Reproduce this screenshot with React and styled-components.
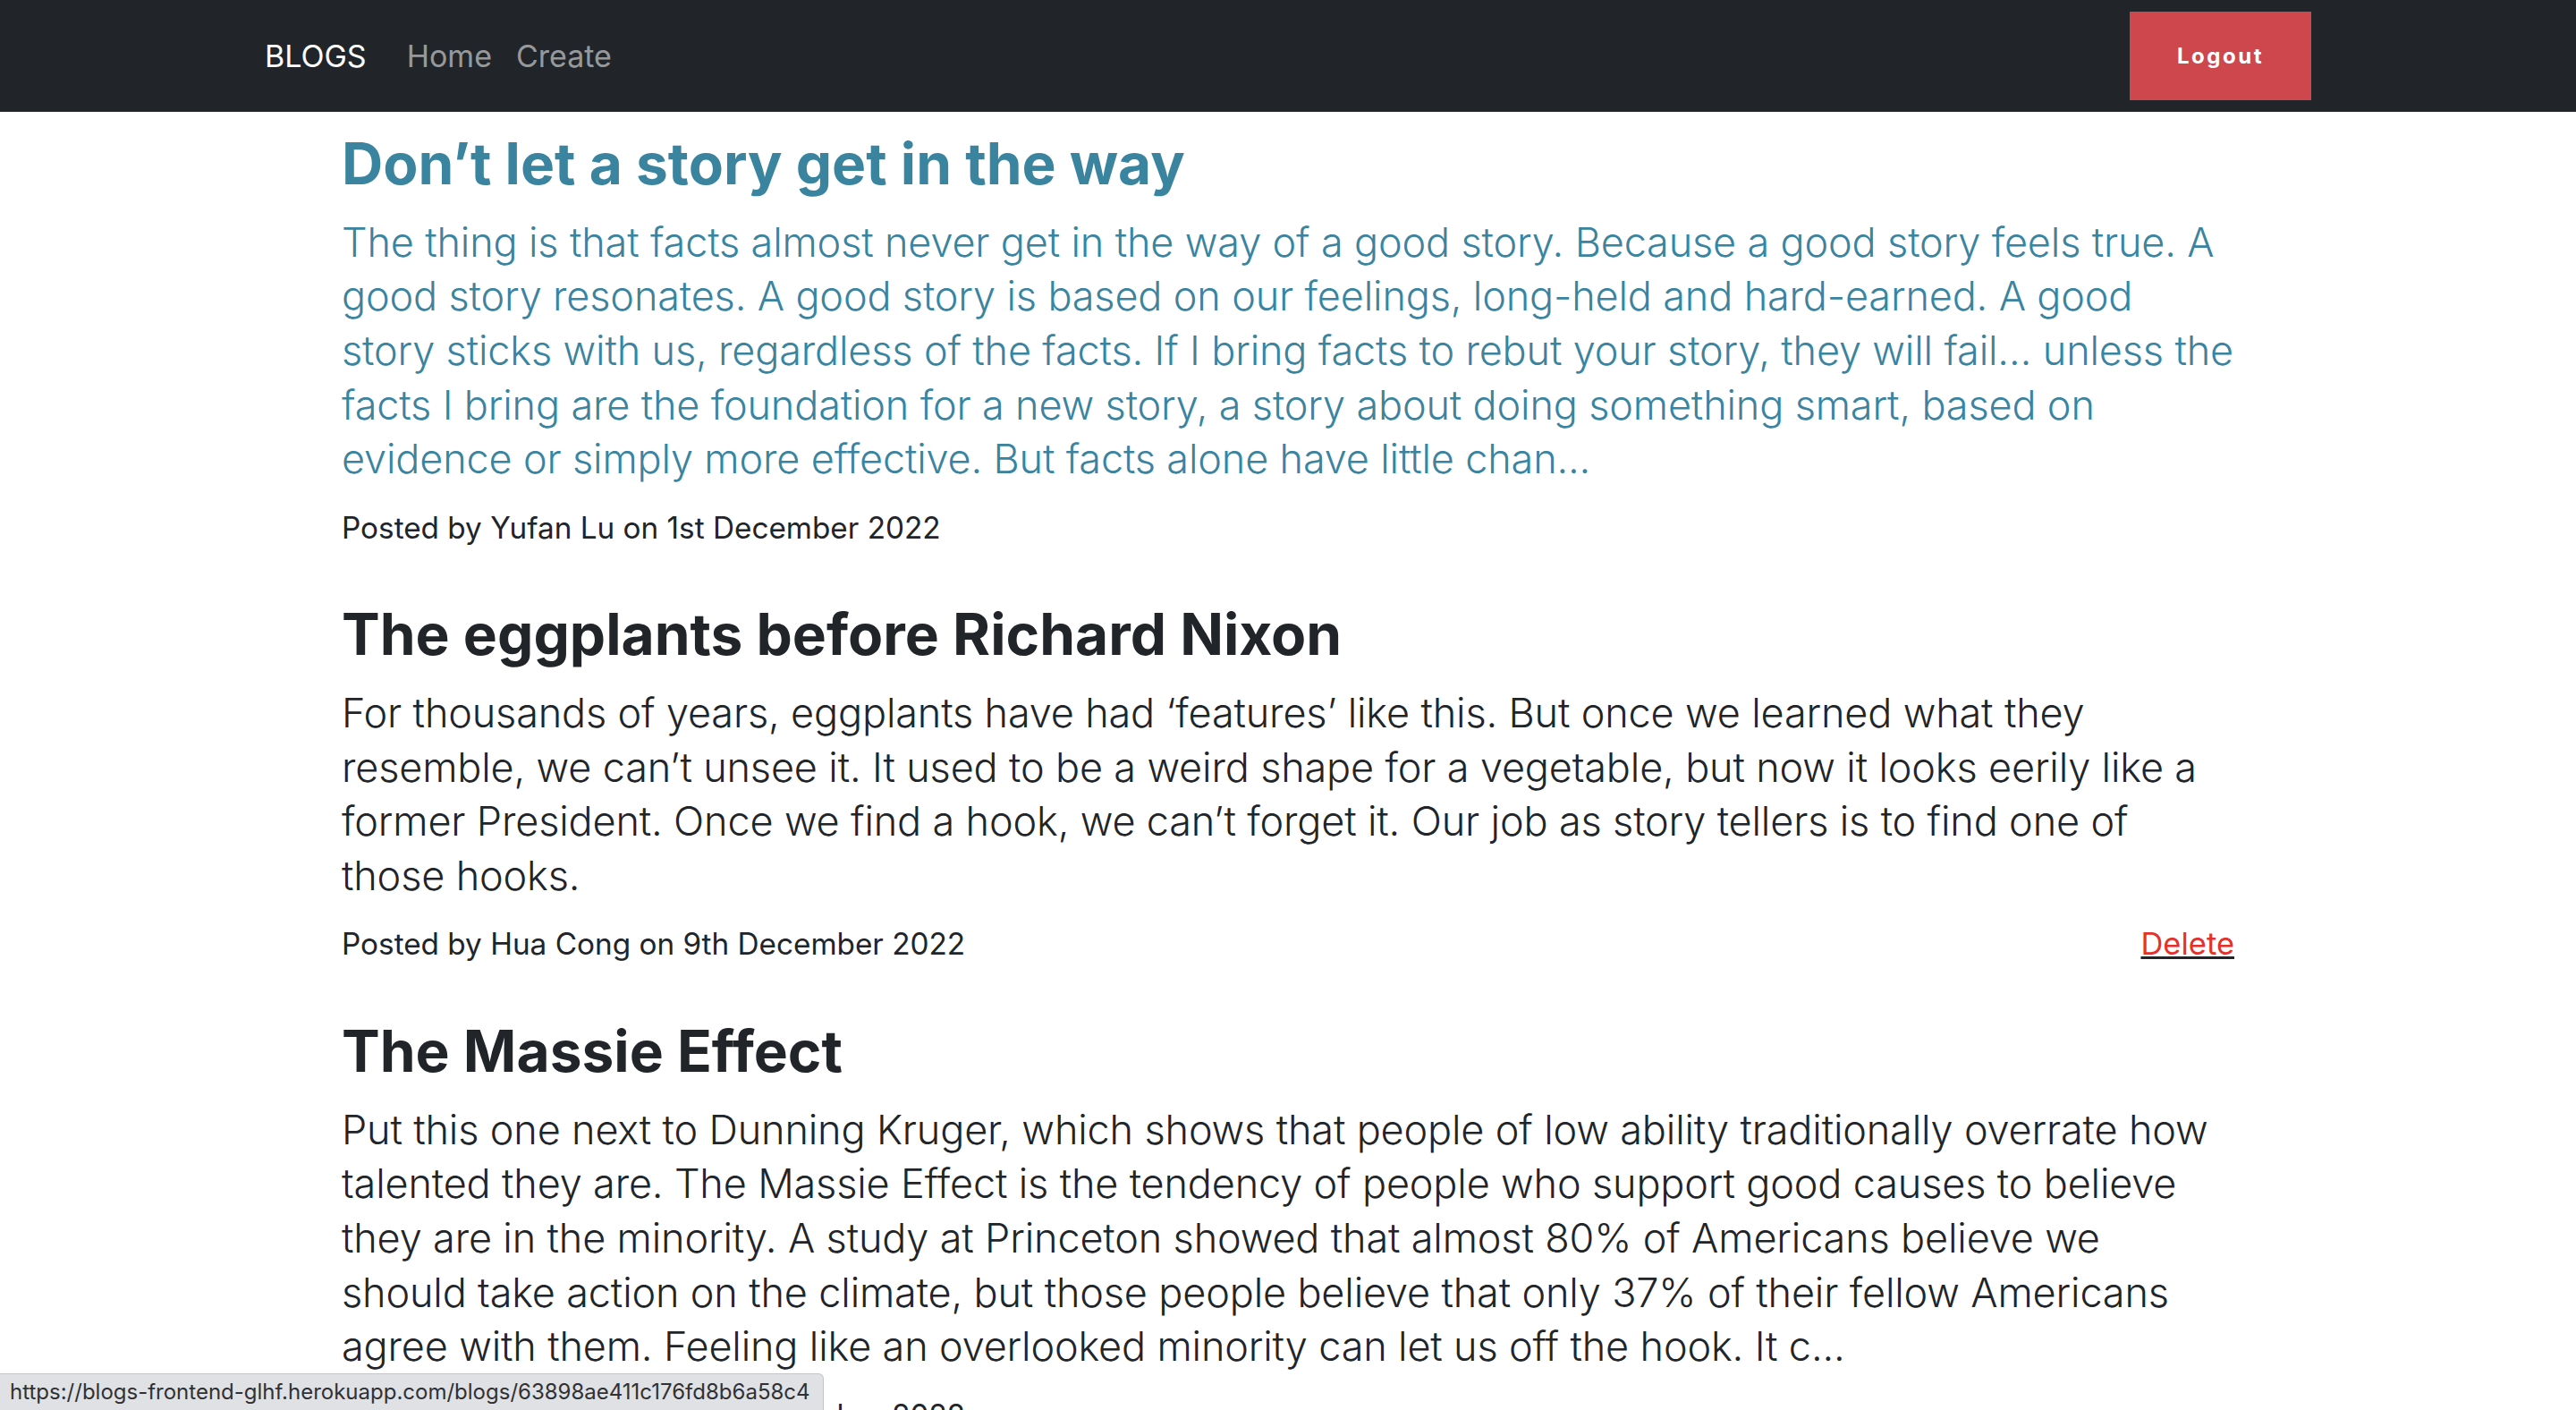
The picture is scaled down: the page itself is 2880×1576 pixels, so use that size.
import React from "react";
import styled, { createGlobalStyle } from "styled-components";

const GlobalStyle = createGlobalStyle`
  body {
    margin: 0;
    background: #fff;
    color: #212529;
    font-family: Inter, "Noto Sans", sans-serif;
  }
`;

const Navbar = styled.nav`
  background: #212529;
  height: 125px;
  display: flex;
  align-items: center;
`;

const NavInner = styled.div`
  width: 2288px;
  margin: 0 auto;
  display: flex;
  align-items: center;
`;

const Brand = styled.a`
  color: #fff;
  font-size: 34px;
  margin-right: 45px;
  text-decoration: none;
`;

const NavLink = styled.a`
  color: rgba(255, 255, 255, 0.55);
  font-size: 34px;
  margin-right: 27px;
  text-decoration: none;
`;

const LogoutButton = styled.button`
  margin-left: auto;
  width: 203px;
  height: 99px;
  background: #cd474d;
  border: none;
  color: #fff;
  font-family: inherit;
  font-weight: 700;
  font-size: 24px;
  letter-spacing: 2.5px;
`;

const Main = styled.main`
  width: 2116px;
  margin: 0 auto;
  padding-top: 20px;
`;

const Post = styled.article`
  margin-bottom: 57px;
`;

const PostLink = styled.a`
  display: block;
  text-decoration: none;
  color: ${(p) => (p.$hover ? "#3a849f" : "#212529")};
`;

const Title = styled.h2`
  margin: 0 0 19px;
  font-size: 64px;
  font-weight: 700;
  line-height: 1.2;
`;

const Body = styled.p`
  margin: 0 0 22px;
  font-size: 45px;
  font-weight: 300;
  line-height: 60.6px;
  letter-spacing: -0.15px;
`;

const MetaRow = styled.div`
  display: flex;
  justify-content: space-between;
  align-items: center;
  font-size: 33.3px;
  line-height: 48.5px;
`;

const DeleteLink = styled.a`
  color: #212529;
  font-size: 34.5px;
  text-decoration: underline;
  span {
    color: #e4312b;
  }
`;

const StatusBar = styled.div`
  position: fixed;
  left: 0;
  bottom: 0;
  height: 40px;
  padding: 0 14px 0 11px;
  background: #dfe1e5;
  border: 1px solid #c3c6ca;
  border-left: none;
  border-bottom: none;
  border-top-right-radius: 6px;
  color: #2f3134;
  font-size: 24px;
  line-height: 40px;
`;

const posts = [
  {
    title: "Don’t let a story get in the way",
    body: "The thing is that facts almost never get in the way of a good story. Because a good story feels true. A good story resonates. A good story is based on our feelings, long-held and hard-earned. A good story sticks with us, regardless of the facts. If I bring facts to rebut your story, they will fail… unless the facts I bring are the foundation for a new story, a story about doing something smart, based on evidence or simply more effective. But facts alone have little chan...",
    meta: "Posted by Yufan Lu on 1st December 2022",
    hover: true,
  },
  {
    title: "The eggplants before Richard Nixon",
    body: "For thousands of years, eggplants have had ‘features’ like this. But once we learned what they resemble, we can’t unsee it. It used to be a weird shape for a vegetable, but now it looks eerily like a former President. Once we find a hook, we can’t forget it. Our job as story tellers is to find one of those hooks.",
    meta: "Posted by Hua Cong on 9th December 2022",
    canDelete: true,
  },
  {
    title: "The Massie Effect",
    body: "Put this one next to Dunning Kruger, which shows that people of low ability traditionally overrate how talented they are. The Massie Effect is the tendency of people who support good causes to believe they are in the minority. A study at Princeton showed that almost 80% of Americans believe we should take action on the climate, but those people believe that only 37% of their fellow Americans agree with them. Feeling like an overlooked minority can let us off the hook. It c...",
    meta: "Posted by Hua Cong on 9th December 2022",
  },
];

export default function App() {
  return (
    <>
      <GlobalStyle />
      <Navbar>
        <NavInner>
          <Brand href="#">BLOGS</Brand>
          <NavLink href="#">Home</NavLink>
          <NavLink href="#">Create</NavLink>
          <LogoutButton>Logout</LogoutButton>
        </NavInner>
      </Navbar>
      <Main>
        {posts.map((post, i) => (
          <Post key={i}>
            <PostLink href="#" $hover={post.hover}>
              <Title>{post.title}</Title>
              <Body>{post.body}</Body>
            </PostLink>
            <MetaRow>
              <span>{post.meta}</span>
              {post.canDelete && (
                <DeleteLink href="#">
                  <span>Delete</span>
                </DeleteLink>
              )}
            </MetaRow>
          </Post>
        ))}
      </Main>
      <StatusBar>https://blogs-frontend-glhf.herokuapp.com/blogs/63898ae411c176fd8b6a58c4</StatusBar>
    </>
  );
}
